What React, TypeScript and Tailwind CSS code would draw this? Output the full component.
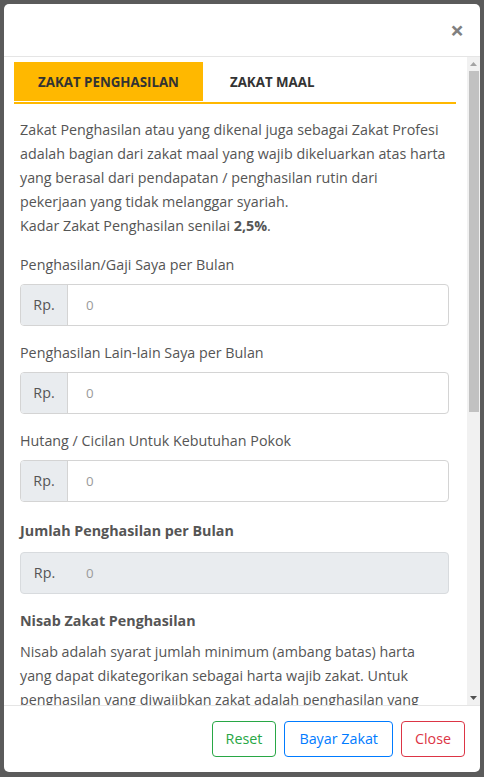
import { useState } from "react";

const fields = [
  "Penghasilan/Gaji Saya per Bulan",
  "Penghasilan Lain-lain Saya per Bulan",
  "Hutang / Cicilan Untuk Kebutuhan Pokok",
];

export default function App() {
  const [tab, setTab] = useState<"penghasilan" | "maal">("penghasilan");
  const [values, setValues] = useState<string[]>(["", "", ""]);

  return (
    <div
      className="h-screen w-full bg-[#5b5b5b] px-[4px] pt-[4px] pb-[5px]"
      style={{ fontFamily: '"Open Sans", "Noto Sans", sans-serif' }}
    >
      <div className="flex h-full w-[476px] flex-col overflow-hidden rounded-[5px] bg-white">
        {/* Header */}
        <div className="flex h-[53px] shrink-0 items-center justify-end border-b border-[#e5e5e5] pr-[16px]">
          <button className="text-[24px] leading-none font-bold text-[#808080]">×</button>
        </div>

        {/* Body */}
        <div className="flex min-h-0 flex-1">
          <div className="flex-1 overflow-hidden pt-[5px] pl-[16px] pr-[18px] text-[14.3px] leading-[24px] text-[#555]">
            <div className="-ml-[6px] -mr-[7px] flex border-b-2 border-[#ffb800]">
              <button
                onClick={() => setTab("penghasilan")}
                className={`mb-[1px] h-[39px] w-[189px] text-[13.3px] font-bold text-[#333] ${tab === "penghasilan" ? "bg-[#ffb800]" : ""}`}
              >
                ZAKAT PENGHASILAN
              </button>
              <button
                onClick={() => setTab("maal")}
                className={`mb-[1px] h-[39px] px-[27px] text-[13.3px] font-bold text-[#333] ${tab === "maal" ? "bg-[#ffb800]" : ""}`}
              >
                ZAKAT MAAL
              </button>
            </div>

            <p className="mt-[14px] pr-[3px]">
              Zakat Penghasilan atau yang dikenal juga sebagai Zakat Profesi adalah bagian dari zakat maal yang wajib
              dikeluarkan atas harta yang berasal dari pendapatan / penghasilan rutin dari pekerjaan yang tidak
              melanggar syariah.
              <br />
              Kadar Zakat Penghasilan senilai <b>2,5%</b>.
            </p>

            <div className="mt-[15px]">
              {fields.map((label, i) => (
                <div key={label} className="mb-[15px]">
                  <div className="mb-[7px]">{label}</div>
                  <div className="flex h-[42px] rounded-[4px] border border-[#d4d4d4]">
                    <span className="flex w-[47px] items-center justify-center rounded-l-[3px] border-r border-[#d4d4d4] bg-[#e9ecef]">
                      Rp.
                    </span>
                    <input
                      value={values[i]}
                      onChange={(e) => setValues(values.map((v, j) => (j === i ? e.target.value : v)))}
                      placeholder="0"
                      className="min-w-0 flex-1 pl-[18px] text-[13.3px] outline-none placeholder:text-[#9a9a9a]"
                    />
                  </div>
                </div>
              ))}

              <div className="mb-[15px] pt-[2px]">
                <div className="mb-[9px] font-bold">Jumlah Penghasilan per Bulan</div>
                <div className="flex h-[42px] rounded-[4px] border border-[#d8dbde] bg-[#e9ecef]">
                  <span className="flex w-[47px] items-center justify-center">Rp.</span>
                  <input
                    disabled
                    placeholder="0"
                    className="min-w-0 flex-1 bg-transparent pl-[18px] text-[13.3px] outline-none placeholder:text-[#9a9a9a]"
                  />
                </div>
              </div>
            </div>

            <div className="mb-[7px] font-bold">Nisab Zakat Penghasilan</div>
            <p className="pr-[3px]">
              Nisab adalah syarat jumlah minimum (ambang batas) harta yang dapat dikategorikan sebagai harta wajib
              zakat. Untuk penghasilan yang diwajibkan zakat adalah penghasilan yang mencapai nisab.
            </p>
          </div>

          {/* scrollbar */}
          <div className="flex w-[13px] shrink-0 flex-col items-center bg-[#f1f1f1]">
            <svg width="9" height="14" viewBox="0 0 9 14" className="shrink-0">
              <path d="M1 9 L4.5 5 L8 9 Z" fill="#a3a3a3" />
            </svg>
            <div className="h-[341px] w-[10px] bg-[#c1c1c1]" />
            <div className="flex-1" />
            <svg width="9" height="14" viewBox="0 0 9 14" className="shrink-0">
              <path d="M1 5 L8 5 L4.5 9 Z" fill="#505050" />
            </svg>
          </div>
        </div>

        {/* Footer */}
        <div className="flex h-[67px] shrink-0 items-center justify-end gap-[8px] border-t border-[#e5e5e5] pr-[15px] text-[14.3px]">
          <button className="h-[36px] rounded-[4px] border border-[#28a745] px-[13px] text-[#28a745]">Reset</button>
          <button className="h-[36px] rounded-[4px] border border-[#007bff] px-[14px] text-[#007bff]">
            Bayar Zakat
          </button>
          <button className="h-[36px] rounded-[4px] border border-[#dc3545] px-[13px] text-[#dc3545]">Close</button>
        </div>
      </div>
    </div>
  );
}
